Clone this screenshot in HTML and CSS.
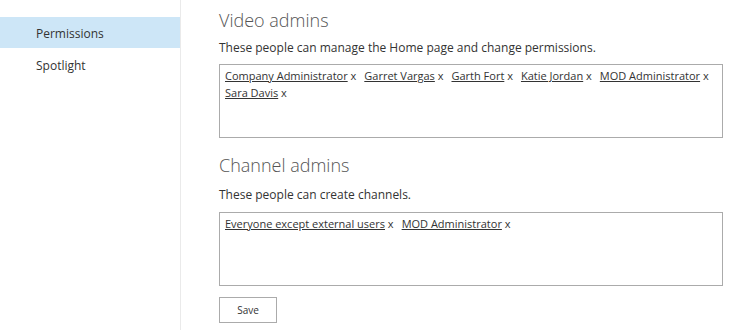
FILE: index.html
```html
<!DOCTYPE html>
<html lang="en">
<head>
    <meta charset="UTF-8">
    <meta name="viewport" content="width=device-width, initial-scale=1.0">
    <title>Video settings</title>
    <link rel="stylesheet" href="styles.css">
</head>
<body>
    <div class="page">
        <div class="nav">
            <a class="nav-item active" href="#">Permissions</a>
            <a class="nav-item" href="#">Spotlight</a>
        </div>
        <div class="content">
            <div class="section">
                <h2>Video admins</h2>
                <p class="desc">These people can manage the Home page and change permissions.</p>
                <div class="people">
                    <span class="person"><a href="#">Company Administrator</a> x</span>
                    <span class="person"><a href="#">Garret Vargas</a> x</span>
                    <span class="person"><a href="#">Garth Fort</a> x</span>
                    <span class="person"><a href="#">Katie Jordan</a> x</span>
                    <span class="person"><a href="#">MOD Administrator</a> x</span>
                    <span class="person"><a href="#">Sara Davis</a> x</span>
                </div>
            </div>

            <div class="section second">
                <h2>Channel admins</h2>
                <p class="desc">These people can create channels.</p>
                <div class="people">
                    <span class="person"><a href="#">Everyone except external users</a> x</span>
                    <span class="person"><a href="#">MOD Administrator</a> x</span>
                </div>
            </div>

            <button type="button" class="save">Save</button>
        </div>
    </div>
</body>
</html>
```

FILE: styles.css
```css
* {
    margin: 0;
    padding: 0;
    box-sizing: border-box;
}
body {
    font-family: "Open Sans", "Noto Sans", sans-serif;
    font-size: 12px;
    color: #333;
    background-color: #fff;
}
.page {
    display: flex;
    min-height: 330px;
}
.nav {
    width: 181px;
    flex-shrink: 0;
    display: flex;
    flex-direction: column;
    padding-top: 17px;
    border-right: 1px solid #eaeaea;
}
.nav-item {
    display: block;
    height: 31px;
    line-height: 27px;
    padding: 3px 0 0 36px;
    color: #333;
    text-decoration: none;
}
.nav-item.active {
    background-color: #cde6f7;
}
.nav-item + .nav-item {
    margin-top: 1px;
}
.content {
    flex-grow: 1;
    padding: 8px 16px 0 38px;
    display: flex;
    flex-direction: column;
    align-items: flex-start;
}
.section {
    display: flex;
    flex-direction: column;
}
.section.second {
    margin-top: 15px;
}
h2 {
    font-size: 18px;
    font-weight: 300;
    line-height: 24px;
    color: #555;
}
.desc {
    margin-top: 8px;
    line-height: 16px;
}
.second .desc {
    margin-top: 10px;
}
.people {
    margin-top: 8px;
    width: 504px;
    height: 74px;
    border: 1px solid #ababab;
    padding: 2px 5px;
    display: flex;
    flex-wrap: wrap;
    align-content: flex-start;
    column-gap: 8px;
    font-size: 11px;
    line-height: 17px;
}
.second .people {
    margin-top: 9px;
}
.person {
    white-space: nowrap;
}
.person a {
    color: #333;
    text-decoration: underline;
}
.save {
    margin-top: 11px;
    width: 58px;
    height: 26px;
    border: 1px solid #ababab;
    background-color: #fff;
    font-family: "Open Sans", sans-serif;
    font-size: 10px;
    color: #333;
}
```
